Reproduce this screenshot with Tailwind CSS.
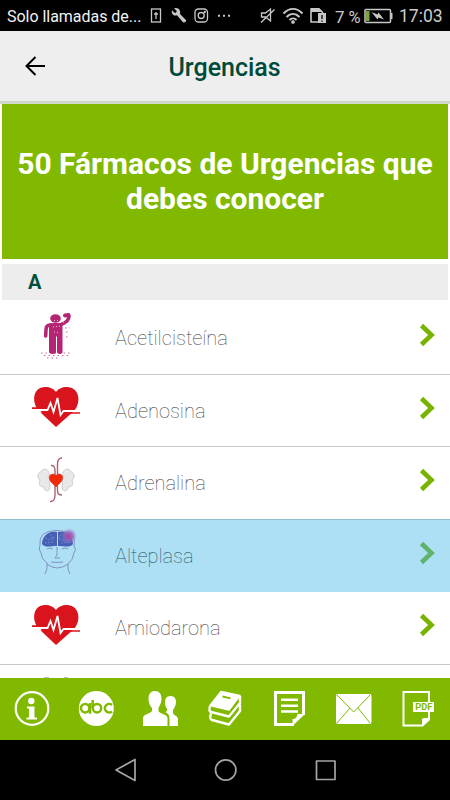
<!DOCTYPE html>
<html lang="es">
<head>
<meta charset="utf-8">
<title>Urgencias</title>
<script src="https://cdn.jsdelivr.net/npm/@tailwindcss/browser@4"></script>
</head>
<body class="w-[450px] h-[800px] overflow-hidden bg-white font-['Roboto',sans-serif]">
<svg class="hidden">
  <symbol id="heart" viewBox="28 383 56 48">
    <path fill="#d9141c" d="M56 427 L39 411 C31 402 33 387 45 387 C50 387 54 389 56 392 C58 389 62 387 67 387 C79 387 82 402 74 411 Z"/>
    <path fill="none" stroke="#fff" stroke-width="1.800" d="M31 410H47.500L50.500 403L53.500 412L57.500 398L60.500 415L63.500 411H81"/>
    <path fill="#fff" d="M31 409.500h8l3 3h-9zM72 414h9v4h-12z"/>
    <path fill="none" stroke="#d9141c" stroke-width="1.700" d="M32 408.200H46.500M65 413H80"/>
  </symbol>
  <symbol id="chev" viewBox="0 0 16 24"><path fill="none" stroke="currentColor" stroke-width="4.600" d="M2 2.500L12 12L2 21.500"/></symbol>
</svg>
<div class="flex flex-col w-[450px] h-[800px]">
  <div class="flex h-[31px] shrink-0 items-center bg-black text-[#ddd]">
    <span class="ml-[7px] w-[138px] shrink-0 whitespace-nowrap pt-[2px] text-[16px] tracking-[-0.03px] text-[#f2f2f2]">Solo llamadas de...</span>
    <svg class="h-[31px] w-[200px] shrink-0" viewBox="145 0 200 31" fill="none" stroke="#c8c8c8" stroke-width="1.300">
      <rect x="151.500" y="9" width="9" height="13"/><path d="M156 12v7M154 14h4"/>
      <path fill="#c8c8c8" stroke="none" d="M186 20l-6-6c1-3-1-6-4-6l-2 .3 3 3-2 2-3-3c-1 4 2 6 5 5l6 7c1 1 4-1 3-2.300z"/>
      <rect x="195" y="9" width="12.500" height="13" rx="3.500"/><circle cx="201.200" cy="15.500" r="3"/><circle cx="204.800" cy="12" r=".5"/>
      <path fill="#c8c8c8" stroke="none" d="M218 14.700h2v2h-2zM223 14.700h2v2h-2zM228 14.700h2v2h-2z"/>
      <path d="M261.500 13h4l5-4v12l-5-4h-4zM274.500 9.500L261 22.500"/>
      <g stroke-width="2"><path d="M283.500 13.500c6-6 13-6 19 0M286.500 17c4-4 9-4 13 0M289.500 20c2-2 5-2 7 0"/></g><circle cx="293" cy="22" r="1.200" fill="#c8c8c8"/>
      <path stroke-width="1.600" d="M318 22h-7V9h8l4 4"/><path fill="#c8c8c8" stroke="none" d="M311 8h8l4 4h-12zM318 13h8v10h-8z"/><path stroke="#000" d="M322 15v4M322 20.500v1.300"/>
      <text x="335" y="22.500" fill="#ccc" stroke="none" font-size="17">7</text>
    </svg>
    <svg class="h-[31px] w-[54px] shrink-0" viewBox="345 0 54 31"><text x="348.500" y="22.500" fill="#ccc" font-size="16" textLength="12" lengthAdjust="spacingAndGlyphs">%</text>
      <rect x="365" y="9.500" width="25.500" height="13" rx="1" fill="none" stroke="#c8c8c8" stroke-width="1.500"/><path fill="#7da33c" d="M366 11h3.500v10H366z"/><path fill="#c8c8c8" d="M391 13h1.500v6H391zM371.500 12l6 2.500 1-2 5.500 7-5.500-2-1 2z"/></svg>
    <span class="w-[46px] whitespace-nowrap pt-[2px] text-[17.500px] text-[#ccc]">17:03</span>
  </div>
  <header class="flex h-[70px] shrink-0 items-center bg-[#eee]">
    <svg class="ml-[24px] h-[22px] w-[22px]" viewBox="24 55 22 22" fill="none" stroke="#000" stroke-width="2"><path d="M45 66H27M35.500 57L26.500 66L35.500 75"/></svg>
    <h1 class="ml-[122.500px] pt-[4px] text-[25px] font-medium text-[#004a3a]">Urgencias</h1>
  </header>
  <div class="h-[3px] shrink-0 bg-linear-to-b from-[#cdd2c6] to-[#d7dcd0]"></div>
  <section class="mx-[2px] flex h-[155px] shrink-0 items-center justify-center bg-[#80b900] pb-[1px] text-center text-[30px] leading-[35px] font-bold text-white">
    <p class="tracking-[-0.02px]"><span class="block">50 Fármacos de Urgencias que</span><span class="block">debes conocer</span></p>
  </section>
  <div class="mt-[5px] ml-[2px] mr-[2px] flex h-[36px] shrink-0 items-center bg-[#ededed] pl-[26px] pb-[1px] text-[20px] font-bold text-[#00523e]">A</div>
  <main class="h-[378px] shrink-0 overflow-hidden text-[20px] font-thin text-[#3c3c3c]">
    <div class="flex h-[75px] items-center border-b border-[#c8c8c8]">
      <svg class="h-[74px] w-[115px]" viewBox="0 300 115 74">
        <g fill="none" stroke="#b42574" stroke-linecap="round"><path stroke-width="3.500" d="M45.700 336L46 330Q46 325 50 325L61 324.500Q69 322 69 316"/><path stroke-width="4" d="M65 315.500l3.500-.5"/></g>
        <path fill="#b42574" d="M49 323.500h13.500v29q-1 1.500-2.500 1.500t-3-1.500v-16h-1v16q-1 1.500-3 1.500t-4-1.500z"/><ellipse cx="55.500" cy="318.500" rx="5.300" ry="4.200" fill="#b42574"/>
        <path stroke="#e9bed5" stroke-width="1" stroke-dasharray="1 2" fill="none" d="M54 320.500h7M53 327l8-1M54 332l6 1M63 322l4 2"/>
        <path stroke="#b42574" stroke-width=".7" stroke-dasharray="1.500 3" fill="none" d="M41 353h30M44 355.500h26M47 358h12M65 328h5M66 332h4M66 337h3"/>
      </svg><span class="pt-[2px]">Acetilcisteína</span>
      <svg class="ml-auto mr-[13px] mb-[5px] h-[24px] w-[19px] text-[#78b300]"><use href="#chev"/></svg>
    </div>
    <div class="flex h-[72px] items-center border-b border-[#c8c8c8]">
      <svg class="ml-[28px] mr-[31px] mb-[7px] h-[48px] w-[56px]"><use href="#heart"/></svg><span>Adenosina</span>
      <svg class="ml-auto mr-[13px] mb-[6px] h-[24px] w-[19px] text-[#78b300]"><use href="#chev"/></svg>
    </div>
    <div class="flex h-[72px] items-center">
      <svg class="h-[72px] w-[115px]" viewBox="0 447 115 72">
        <g fill="#e8e8e8" stroke="#c4c4c4" stroke-width=".8"><path d="M49 473c-1-5-7-5-8-1-4 1-4 6-1 8-2 4 0 7 4 7 0 5 5 5 6 1zM63 473c1-5 7-5 8-1 4 1 4 6 1 8 2 4 0 7-4 7 0 5-5 5-6 1z"/></g>
        <g fill="none" stroke="#a96472" stroke-width="1.400"><path d="M57.500 476V464Q57.500 458 62 458M55 476V471Q55 465 51 465.500M55 486V495Q55 502 50 501.500M57.500 486V491Q57.500 495 62 495"/></g>
        <path fill="#f12a0a" stroke="#b6342b" stroke-width=".5" d="M56 487L51 482C48 478 49 474 53 474Q55 474 56 475.500Q57 474 59 474C63 474 64 478 61 482Z"/>
      </svg><span>Adrenalina</span>
      <svg class="ml-auto mr-[13px] mb-[6px] h-[24px] w-[19px] text-[#78b300]"><use href="#chev"/></svg>
    </div>
    <div class="flex h-[73px] items-center border-t border-[#8ebccd] bg-[#ade0f5]">
      <svg class="h-[72px] w-[115px]" viewBox="0 520 115 72">
        <path fill="none" stroke="#8088bb" stroke-width=".9" d="M45 574Q48 569 47 563Q41 559 41 553Q38 549 40 545Q38 531 56 530.500Q77 531 74 546Q77 549 74 553Q73 560 68 564Q67 569 70 574M47 564Q57 572 68 564M57 547V555L55 558H60M47 549Q50 547 53 549M62 549Q65 547 68 549M51 562Q57 563 63 562"/>
        <path fill="#4660b5" d="M57 532C48 530 42 537 42 544C45 548 50 546 57 546zM58 532C67 530 73 537 73 544C70 548 65 546 58 546z"/>
        <path fill="none" stroke="#7991d2" stroke-width=".8" stroke-dasharray="2 1" d="M45 538l4 2 6-3M45 543l8-1M50 534l4 6M61 534l-2 5 7 2 5-3M61 543l9-1"/>
        <defs><radialGradient id="glow"><stop stop-color="#ba3c9e"/><stop offset=".5" stop-color="#9862ba" stop-opacity=".8"/><stop offset="1" stop-color="#9c83cc" stop-opacity="0"/></radialGradient></defs><circle cx="69" cy="536" r="8" fill="url(#glow)"/>
      </svg><span class="text-[#24505f]">Alteplasa</span>
      <svg class="ml-auto mr-[13px] mb-[6px] h-[24px] w-[19px] text-[#60b36b]"><use href="#chev"/></svg>
    </div>
    <div class="flex h-[73px] items-center border-b border-[#c8c8c8]">
      <svg class="ml-[28px] mr-[31px] mb-[7px] h-[48px] w-[56px]"><use href="#heart"/></svg><span>Amiodarona</span>
      <svg class="ml-auto mr-[13px] mb-[6px] h-[24px] w-[19px] text-[#78b300]"><use href="#chev"/></svg>
    </div>
    <svg class="h-[13px] w-[115px]" viewBox="0 665 115 13"><path stroke="#bbb" d="M44 677.500h5M64 677.500h4"/></svg>
  </main>
  <nav class="h-[62px] shrink-0 bg-[#80b900]">
    <svg class="block h-[62px] w-[450px]" viewBox="0 678 450 62" fill="#fff">
      <circle cx="32" cy="708.500" r="16.300" fill="none" stroke="#fff" stroke-width="2.200"/><circle cx="31.300" cy="701" r="3.200"/><path d="M27 706.500h7.500v11h2.500v2H26.500v-2H29v-9h-2z"/>
      <circle cx="96.300" cy="708.500" r="17.500"/>
      <g fill="none" stroke="#80b900" stroke-width="2.500"><circle cx="85.200" cy="708.200" r="4.200"/><path d="M90 703v10.700M92.700 700v8"/><circle cx="97" cy="708.200" r="4.200"/><path d="M112 705a4.300 4.300 0 1 0 0 6.500"/></g>
      <path d="M155 691c4.500 0 6.500 3 6.500 8 0 4-2 7-3 9v3c1 3 9 3 9 7v8H143v-8c0-4 7-4 9-7v-3c-2-2-3.500-5-3.500-9 0-5 2-8 6.500-8z"/>
      <path d="M170.500 696c4 0 5.500 3 5.500 6 0 4-2 6-3 8v3c1 3 4.500 2 5 6v7h-8.500v-8c0-4-3-5-4-6 2-1 2-2 1-4-1.500-2-1.500-4-1.500-6 0-3 1.500-6 5.500-6z"/>
      <g stroke-linejoin="round" stroke="#fff"><path stroke-width="1.500" d="M221 691.500L240 695.500L229 710L210 705.500Z"/><path d="M222.500 696.500l8 1.800" stroke="#80b900" stroke-width="1.800"/>
      <path fill="none" stroke-width="2.400" d="M210 706Q208.500 711 211 712L229 716.500L240 703V696M211 713.500Q209 719 212 720L229 724.500L240 711V704.500"/></g>
      <path fill="none" stroke="#fff" stroke-width="3" d="M294 724.500H275.500V692.500H303.500V715"/><path d="M305 714l-12.500 12v-7q4.500 0 5-5zM281 698.500h17v2.400h-17zM281 704.500h17v2.400h-17zM281 710.300h17v2.400h-17z"/>
      <rect x="336" y="694" width="35.500" height="30" rx="2"/><path fill="none" stroke="#80b900" d="M337 695l16.700 17L370 695M337 723l13-15M370 723l-12-15"/>
      <path fill="none" stroke="#fff" stroke-width="2" d="M429 702V692H403.500v33.500h19l6.500-6v-8"/><path d="M430 718l-8 8v-7l2-1z"/><rect x="413" y="702" width="21" height="10"/><text x="415.300" y="710" font-size="8.500" font-weight="700" textLength="17" lengthAdjust="spacingAndGlyphs" fill="#80b900">PDF</text>
    </svg>
  </nav>
  <div class="h-[60px] shrink-0 bg-black">
    <svg class="block h-[60px] w-[450px]" viewBox="0 740 450 60" fill="none" stroke="#a5a5a5" stroke-width="1.700" stroke-linejoin="round"><path d="M135 759.500v21L116 770z"/><circle cx="225.700" cy="770" r="10.200"/><rect x="316.500" y="761" width="18.500" height="18.500"/></svg>
  </div>
</div>
</body>
</html>
